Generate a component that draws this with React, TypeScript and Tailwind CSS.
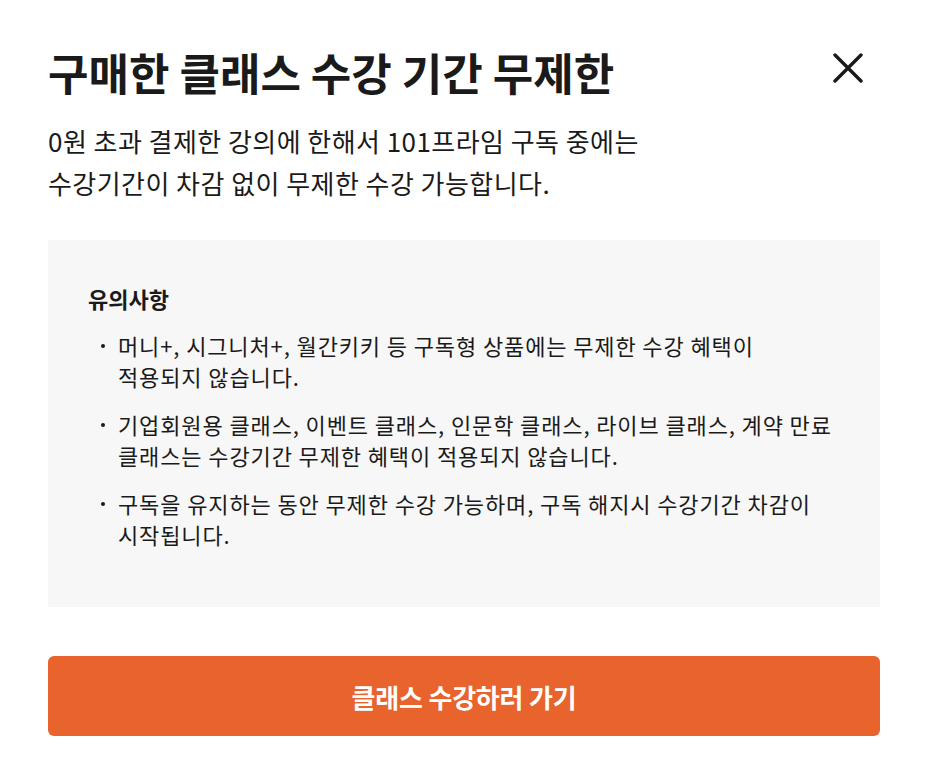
import React from "react";

const font = { fontFamily: '"Noto Sans CJK KR", "Noto Sans", sans-serif' };

export default function App() {
  const items = [
    ["머니+, 시그니처+, 월간키키 등 구독형 상품에는 무제한 수강 혜택이", "적용되지 않습니다."],
    ["기업회원용 클래스, 이벤트 클래스, 인문학 클래스, 라이브 클래스, 계약 만료", "클래스는 수강기간 무제한 혜택이 적용되지 않습니다."],
    ["구독을 유지하는 동안 무제한 수강 가능하며, 구독 해지시 수강기간 차감이", "시작됩니다."],
  ];
  return (
    <div className="w-[926px] h-[784px] bg-white pl-12 pr-[46px] pt-[44px] text-[#1a1a1a]" style={font}>
      <div className="flex items-start justify-between">
        <h1 className="text-[44px] font-bold leading-[57px] whitespace-nowrap">구매한 클래스 수강 기간 무제한</h1>
        <button className="mt-[9px] mr-[17px] w-[30px] h-[30px] flex items-center justify-center">
          <svg width="30" height="30" viewBox="0 0 30 30" fill="none" stroke="#1a1a1a" strokeWidth="3.4" strokeLinecap="round">
            <path d="M2 2 L28 28 M28 2 L2 28" />
          </svg>
        </button>
      </div>
      <p className="mt-[19px] text-[26px] leading-[42px] tracking-[0.45px] whitespace-nowrap">
        0원 초과 결제한 강의에 한해서 101프라임 구독 중에는<br />수강기간이 차감 없이 무제한 수강 가능합니다.
      </p>
      <div className="mt-[36px] bg-[#f7f7f7] px-10 pt-[43px] pb-[57px]">
        <h2 className="text-[22px] font-bold leading-[30px]">유의사항</h2>
        <ul className="mt-[17px] flex flex-col gap-[17px]">
          {items.map((t, i) => (
            <li key={i} className="flex text-[22px] leading-[31px] tracking-[0.88px] pl-[13px]">
              <span className="w-[17px] shrink-0 h-[31px] flex items-center">
                <span className="block w-[4px] h-[4px] rounded-full bg-[#1a1a1a]" />
              </span>
              <span className="whitespace-nowrap">
                {t[0]}
                <br />
                {t[1]}
              </span>
            </li>
          ))}
        </ul>
      </div>
      <button className="mt-[49px] w-full h-[80px] rounded-[6px] bg-[#e9632c] text-white text-[26px] font-semibold tracking-[-0.2px]">
        클래스 수강하러 가기
      </button>
    </div>
  );
}
